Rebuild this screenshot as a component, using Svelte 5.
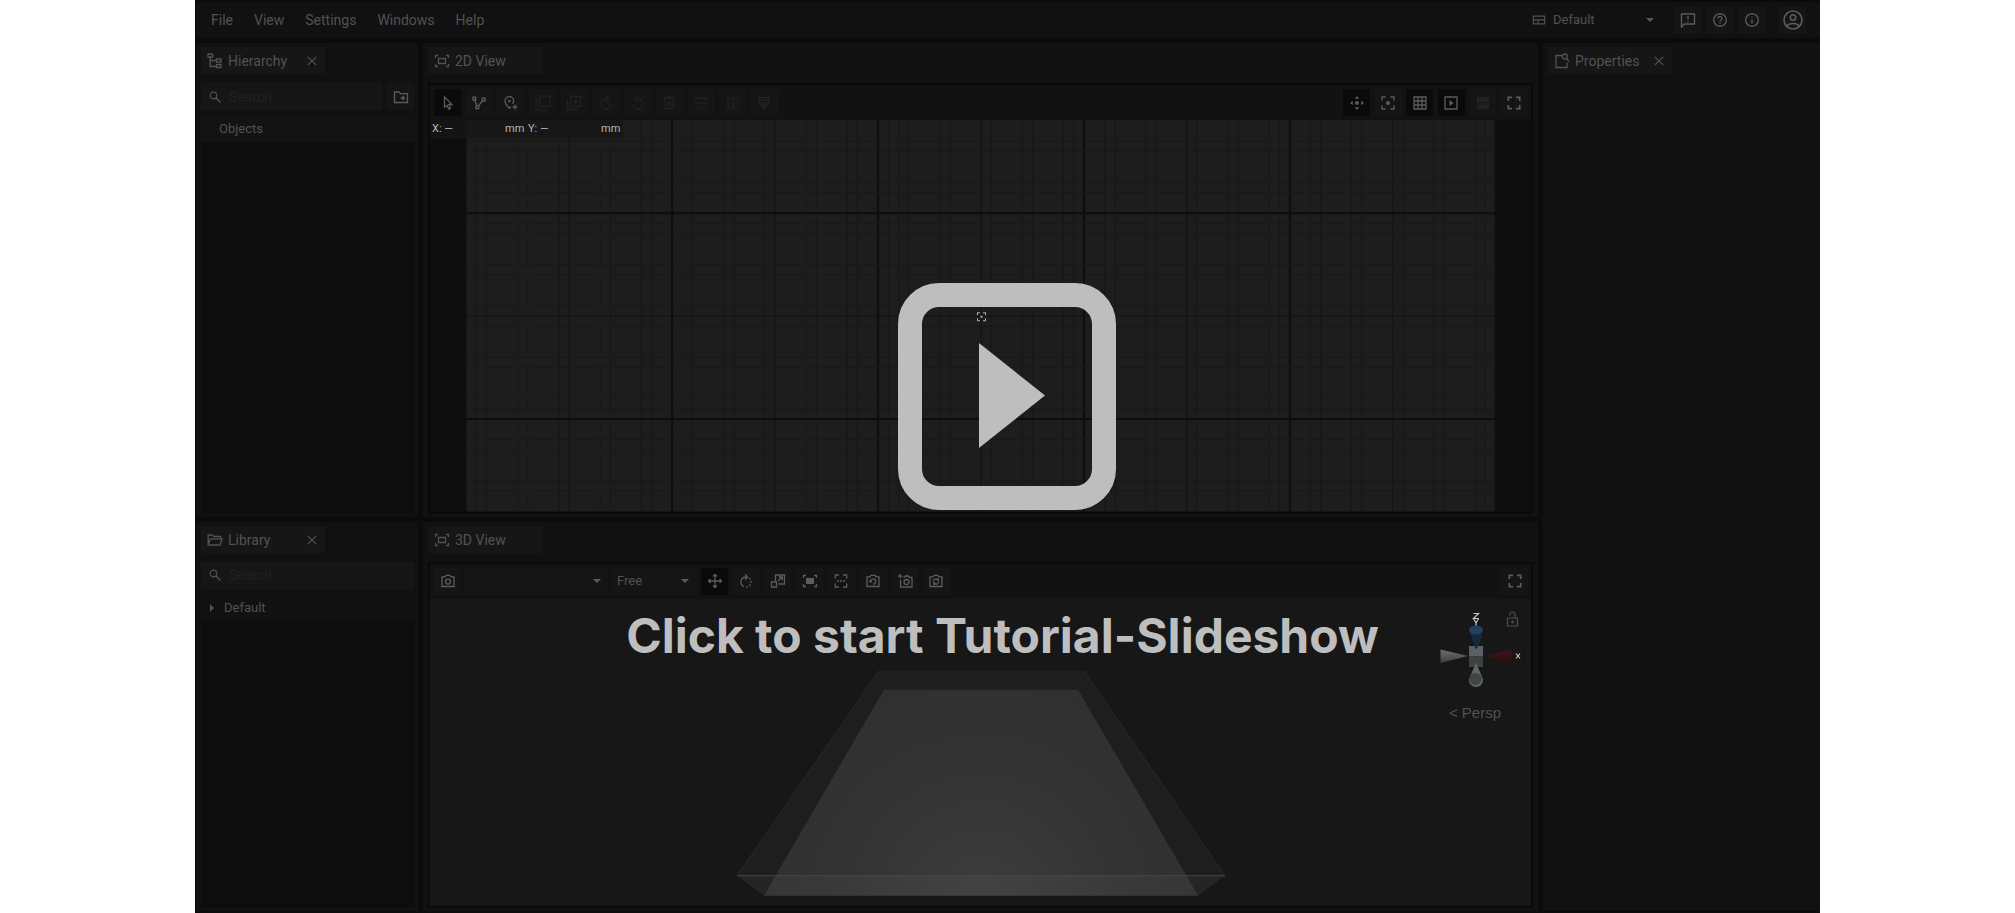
<script>
  const menus = ['File', 'View', 'Settings', 'Windows', 'Help'];

  const tools2d = [
    { icon: 'cursor', label: 'Select', active: true },
    { icon: 'path', label: 'Path' },
    { icon: 'pin', label: 'Add marker' },
    { icon: 'copy', label: 'Copy', off: true },
    { icon: 'duplicate', label: 'Duplicate', off: true },
    { icon: 'redo', label: 'Rotate right', off: true },
    { icon: 'undo', label: 'Rotate left', off: true },
    { icon: 'trash', label: 'Delete', off: true },
    { icon: 'flipv', label: 'Flip vertically', off: true },
    { icon: 'fliph', label: 'Flip horizontally', off: true },
    { icon: 'paint', label: 'Paint', off: true }
  ];
  const view2d = [
    { icon: 'pan', label: 'Pan', active: true },
    { icon: 'focus', label: 'Focus' },
    { icon: 'grid', label: 'Grid', active: true },
    { icon: 'play', label: 'Play', active: true },
    { icon: 'pdf', label: 'PDF', off: true },
    { icon: 'full', label: 'Full screen' }
  ];
  const tools3d = [
    { icon: 'move', label: 'Move', active: true },
    { icon: 'rotate', label: 'Rotate' },
    { icon: 'scale', label: 'Scale' },
    { icon: 'fitfill', label: 'Fit selection' },
    { icon: 'fitall', label: 'Fit all' },
    { icon: 'camreset', label: 'Reset camera' },
    { icon: 'camadd', label: 'Add camera' },
    { icon: 'camsync', label: 'Sync camera' }
  ];

  const step = 10.28;
  const shown = (k, split) => (k < split ? [1, 2] : [2, 3]).includes(((k % 4) + 4) % 4);
  const columns = Array.from({ length: 101 }, (_, k) => k)
    .filter((k) => k % 10 === 0 || shown(k, 42))
    .map((k) => ({ at: 37 + k * step, level: k === 0 || k % 10 ? 0 : k % 20 ? 1 : 2 }));
  const rows = Array.from({ length: 38 }, (_, i) => i - 9)
    .filter((k) => k % 10 === 0 || shown(k, 11))
    .map((k) => ({ at: 93 + k * step, level: k % 10 ? 0 : k % 20 ? 1 : 2 }));
</script>

{#snippet icon(name, size = 16)}
  <svg class="icon" width={size} height={size} viewBox="0 0 16 16" aria-hidden="true">
    {#if name === 'cursor'}
      <path d="M4.500 1.800v10.400l2.500-2 1.700 3.900 1.800-.8-1.700-3.800h3.200z" />
    {:else if name === 'path'}
      <path d="M2 2.200h2.800V5H2zM11.200 3.200H14V6h-2.800zM5 10.800h2.800v2.800H5zM3.800 5l2 5.800M11.400 6 7.500 10.800" />
    {:else if name === 'pin'}
      <path d="M6.300 13.300C3.500 10.300 2 8.300 2 6a4.300 4.300 0 0 1 8.600 0c0 1-.3 1.900-.9 2.800M6.300 13.300l1.500-1.700M12 9.500v5M9.500 12h5" /><circle cx="6.300" cy="6" r="1.300" class="fill" />
    {:else if name === 'copy'}
      <path d="M4.500 1H15v10.500H4.500zM1 4.500V15h10.500" />
    {:else if name === 'duplicate'}
      <path d="M4.500 1.500h10v10h-10zM1.500 4.500v10h10M9.500 4v5M7 6.500h5" />
    {:else if name === 'redo'}
      <path d="M8.500 4H7.500a5 5 0 1 0 5.300 5M8 1l3 3-3 3" />
    {:else if name === 'undo'}
      <path d="M7.500 4h1a5 5 0 1 1-5.300 5M8 1 5 4l3 3" />
    {:else if name === 'trash'}
      <path d="M2.500 3h11M4 3v10.500h8V3M6 2h4M7 6v5M9 6v5" />
    {:else if name === 'flipv'}
      <path d="M3 6V3h10v3M1 8h14" /><path d="M3 10v3h10v-3" stroke-dasharray="2 1.5" />
    {:else if name === 'fliph'}
      <path d="M6 3H3v10h3M8 1v14" /><path d="M10 3h3v10h-3" stroke-dasharray="2 1.5" />
    {:else if name === 'paint'}
      <path d="M3 2.500h10V8H3zM3 5.200h10M4 8v2h8V8" /><path d="M6.300 10h3.400v2.500a1.700 1.700 0 0 1-3.400 0z" class="fill" />
    {:else if name === 'pan'}
      <g class="fill"><path d="m8 1 2.300 2.800H5.700zM8 15l-2.300-2.800h4.600zM1 8l2.800-2.300v4.600zM15 8l-2.800-2.300v4.600z" /><circle cx="8" cy="8" r="2" /></g>
    {:else if name === 'focus'}
      <path d="M2 5.500V2h3.500M10.500 2H14v3.500M14 10.500V14h-3.500M5.500 14H2v-3.500" /><circle cx="8" cy="8" r="2" class="fill" />
    {:else if name === 'grid'}
      <path d="M2 2h12v12H2zM2 6h12M2 10h12M6 2v12M10 2v12" />
    {:else if name === 'play'}
      <path d="M2 2h12v12H2z" /><path d="M6.500 5v6l4-3z" class="fill" />
    {:else if name === 'pdf'}
      <rect x="2" y="2" width="12" height="12" rx="1" class="fill" /><path d="M4 10V6.500h1.200v2H4M7 6.500h1v3H7zM10.200 10V6.500H12M10.200 8.300h1.500" class="cut" />
    {:else if name === 'full'}
      <path d="M2.300 6V2.300H6M10 2.300h3.700V6M13.700 10v3.700H10M6 13.700H2.300V10" class="bold" />
    {:else if name === 'move'}
      <path d="M8 1.500v13M1.500 8h13M6 3.500l2-2 2 2M6 12.500l2 2 2-2M3.500 6l-2 2 2 2M12.500 6l2 2-2 2" />
    {:else if name === 'rotate'}
      <path d="M8.500 4H8a5 5 0 0 0-2 9.600M7.200 1.500 9.500 4 7.200 6.500" /><path d="M11 5a5 5 0 0 1-3 9" stroke-dasharray="2 1.4" />
    {:else if name === 'scale'}
      <path d="M5.500 8V2h9v9h-6M1.500 9h5v5h-5zM8 8l4-4M8.800 4h3.500v3.500" />
    {:else if name === 'fitfill'}
      <path d="M1.500 5V2.500H4M12 2.500h2.500V5M14.500 11v2.500H12M4 13.500H1.500V11" /><rect x="4" y="5" width="8" height="6" class="fill" />
    {:else if name === 'fitall'}
      <path d="M2.300 5.500V2H6M10 2h3.700v3.500M13.700 10.500V14H10M6 14H2.300v-3.500" /><path d="M4 8h8" stroke-dasharray="2 1" />
    {:else if name === 'camera' || name === 'camreset' || name === 'camsync'}
      <path d="M2 3.800h3l1-1.500h4l1 1.500h3v9.700H2z" />
      {#if name === 'camera'}<circle cx="8" cy="8.600" r="2.500" />
      {:else if name === 'camreset'}<path d="M5.500 8.500a2.600 2.600 0 1 1 2.600 2.600M4.300 7.700l1.200 1.500 1.500-1.200" />
      {:else}<path d="M5.400 8.800a2.600 2.600 0 0 1 4.500-2M10.600 8.400a2.600 2.600 0 0 1-4.500 2M10.300 5.200v2H8.500M5.700 12v-2h1.800" />{/if}
    {:else if name === 'camadd'}
      <path d="M6.500 4h1l1-1h3l1 1.500H15V14H3.500V7M3.200 1v4.500M1 3.200h4.500" /><circle cx="9.500" cy="9" r="2.500" />
    {:else if name === 'tree'}
      <path d="M1 1h4.500v3H1zM3.200 4v9.500H9M3.200 7.500H9M9.500 6H14v3H9.500zM9.500 11.500H14v3H9.500z" />
    {:else if name === 'view'}
      <path d="M1.500 5V2.500H4M12 2.500h2.500V5M14.500 11v2.500H12M4 13.500H1.500V11M4.500 5.500h7v5h-7z" />
    {:else if name === 'folder'}
      <path d="M1.200 13V3h4.300L7 4.500h6.500v2M1.200 13 3.500 6.800h11.700L13 13z" />
    {:else if name === 'newfolder'}
      <path d="M1.500 3H6l1.500 1.700h7v8.800h-13zM7.500 9h4M9.500 7l2 2-2 2" />
    {:else if name === 'search'}
      <circle cx="6.300" cy="6.300" r="3.800" /><path d="m9.200 9.200 5 5" class="bold" />
    {:else if name === 'close'}
      <path d="m3.200 3.200 9.600 9.600M12.800 3.200l-9.600 9.600" />
    {:else if name === 'layout'}
      <path d="M1.500 3.500h13v9h-13zM1.500 7.800h13M7 7.800v4.700" />
    {:else if name === 'feedback'}
      <path d="M1.500 15V2h13v10H4.300z" /><path d="M8 4v3.500M8 9v1.300" />
    {:else if name === 'help'}
      <circle cx="8" cy="8" r="6.300" /><path d="M6 6.500a2 2 0 1 1 3 1.700c-.7.400-1 .7-1 1.500M8 11v1.300" />
    {:else if name === 'info'}
      <circle cx="8" cy="8" r="6.300" /><path d="M8 7.200v4.300M8 4.500v1.300" />
    {:else if name === 'user'}
      <circle cx="8" cy="8" r="7.200" /><circle cx="8" cy="6" r="2.200" /><path d="M3.200 13c1.600-3 8-3 9.600 0" />
    {:else if name === 'props'}
      <path d="M8 2.500H2v12h11V9.500" /><circle cx="10.800" cy="3.500" r="2.500" /><path d="m12.500 5.500 2.500 3" />
    {/if}
  </svg>
{/snippet}

{#snippet toolbar(items)}
  {#each items as t}
    <button class="tool" class:active={t.active} disabled={t.off} aria-label={t.label}>{@render icon(t.icon)}</button>
  {/each}
{/snippet}

{#snippet tab(name, label, closable)}
  <div class="tab" class:closable>
    {@render icon(name)}<span>{label}</span>
    {#if closable}<button class="close" aria-label="Close {label}">{@render icon('close', 14)}</button>{/if}
  </div>
{/snippet}

<div class="page">
  <div class="stage">
    <header>
      <nav>{#each menus as m}<button>{m}</button>{/each}</nav>
      <div class="account">
        <label class="layout">{@render icon('layout', 14)}
          <select aria-label="Layout"><option>Default</option></select>
        </label>
        <button class="tool" aria-label="Feedback">{@render icon('feedback')}</button>
        <button class="tool" aria-label="Help">{@render icon('help')}</button>
        <button class="tool" aria-label="Information">{@render icon('info')}</button>
        <button class="tool user" aria-label="Account">{@render icon('user', 20)}</button>
      </div>
    </header>

    <main>
      <section class="panel">
        {@render tab('tree', 'Hierarchy', true)}
        <div class="find">
          <label>{@render icon('search', 14)}<input type="text" placeholder="Search" aria-label="Search objects" /></label>
          <button class="tool" aria-label="New folder">{@render icon('newfolder')}</button>
        </div>
        <div class="row head">Objects</div>
        <div class="list"></div>
      </section>

      <section class="panel view">
        {@render tab('view', '2D View', false)}
        <div class="frame">
          <div class="bar">
            <div class="group wide">{@render toolbar(tools2d)}</div>
            <div class="group side">{@render toolbar(view2d)}</div>
          </div>
          <div class="canvas plan">
            <svg viewBox="0 0 1101 391" preserveAspectRatio="xMidYMid slice" aria-hidden="true">
              <rect x="37" y="0" width="1028" height="391" fill="#1d1d1d" />
              {#each columns as c}<line class="g{c.level}" x1={c.at} x2={c.at} y1="0" y2="391" />{/each}
              {#each rows as r}<line class="g{r.level}" x1="37" x2="1065" y1={r.at} y2={r.at} />{/each}
              <g fill="none" stroke="#aaa"><path d="M547.500 195v-2.500h2.500M553 192.500h2.500v2.500M555.500 198v2.500h-2.500M550 200.500h-2.500v-2.500" /><rect x="551" y="196" width="1" height="1" /></g>
            </svg>
            <div class="coords"><span>X: —</span><span>mm</span><span>Y: —</span><span>mm</span></div>
          </div>
        </div>
      </section>

      <section class="panel props">
        {@render tab('props', 'Properties', true)}
      </section>

      <section class="panel">
        {@render tab('folder', 'Library', true)}
        <div class="find">
          <label>{@render icon('search', 14)}<input type="text" placeholder="Search" aria-label="Search library" /></label>
        </div>
        <div class="row entry"><i></i>Default</div>
        <div class="list"></div>
      </section>

      <section class="panel view">
        {@render tab('view', '3D View', false)}
        <div class="frame">
          <div class="bar">
            <div class="cams">
              <button class="tool" aria-label="Camera">{@render icon('camera')}</button>
              <select class="cam" aria-label="Saved camera"><option></option></select>
              <select class="mode" aria-label="Camera mode"><option>Free</option></select>
              <div class="group mid">{@render toolbar(tools3d)}</div>
            </div>
            <button class="tool" aria-label="Full screen">{@render icon('full')}</button>
          </div>
          <div class="canvas">
            <svg viewBox="0 0 1101 308" preserveAspectRatio="xMidYMid slice" aria-hidden="true">
              <defs>
                <radialGradient id="floor" gradientUnits="userSpaceOnUse" cx="551" cy="305" r="290">
                  <stop offset="0" stop-color="#3d3d3d" /><stop offset=".5" stop-color="#333" /><stop offset="1" stop-color="#2e2e2e" />
                </radialGradient>
              </defs>
              <path d="M449 72h205l141 205-27 20H334l-27-20z" fill="#1e1e1e" />
              <path d="M454 91h194l120 206H334z" fill="url(#floor)" />
              <path d="M307 277h488l-27 20H334z" fill="#fff" fill-opacity=".03" />
              <path d="M449 72 307 277M654 72l141 205" stroke="#292929" fill="none" />
              <path d="M307 277h488" stroke="#484848" />
              <path d="m449 72 5 19M654 72l-6 19" stroke="#242424" />
            </svg>
            <svg class="gizmo" viewBox="0 0 90 120" width="90" height="120" aria-hidden="true">
              <defs>
                <linearGradient id="cone" x2="0" y2="1"><stop stop-color="#6b6f74" /><stop offset="1" stop-color="#3c3f42" /></linearGradient>
                <linearGradient id="red" x2="0" y2="1"><stop stop-color="#431518" /><stop offset="1" stop-color="#2c0c0e" /></linearGradient>
              </defs>
              <path d="M4.500 42.500 32 49 4.500 56z" fill="url(#cone)" />
              <path d="M75.500 42.500 48 49l27.500 7z" fill="url(#red)" />
              <rect x="33" y="39" width="14" height="10.500" fill="#5b6066" /><rect x="33" y="49.500" width="14" height="10.500" fill="#3d4142" />
              <path d="M33.500 25 40 43l6.500-18z" fill="#152940" /><path d="M45.500 28 41 41" stroke="#173a1d" />
              <ellipse cx="40" cy="23" rx="7" ry="4.500" fill="#21405f" />
              <path d="M40 55.500 33.500 71a7 6.500 0 1 0 13 0z" fill="#606468" /><circle cx="39.500" cy="72" r="6" fill="#404444" />
              <g stroke="#c4c4c4" stroke-width="1.2" fill="none"><path d="M37.500 6.500h5l-5 5h5.500M37.500 11.500 40 16l2.500-4.500M40 15.500v3" /><path d="m80 46.500 4 5M84 46.500l-4 5" /></g>
              <g stroke="#4f4f4f" stroke-width="1.2" fill="none"><path d="M71.500 11h10v8h-10zM74 8.500V7.500a2.500 2.500 0 0 1 5 0V11" /><circle cx="76.500" cy="15" r=".8" /></g>
            </svg>
            <button class="persp">&lt; Persp</button>
          </div>
        </div>
      </section>
    </main>

    <button class="start">
      <svg width="218" height="228" viewBox="0 0 218 228" aria-hidden="true">
        <rect x="12" y="12" width="194" height="203" rx="29" fill="none" stroke="#bebebe" stroke-width="24" />
        <path d="M81 60v105l66-52.500z" fill="#bebebe" />
      </svg>
      <span>Click to start Tutorial-Slideshow</span>
    </button>
  </div>
</div>

<style>
  :global(body) { margin: 0; background: #fff; }
  .page { padding: 0 195px; }
  .stage {
    position: relative; box-sizing: border-box; height: 100vh; padding: 2px 0 2px 1px;
    display: flex; flex-direction: column; gap: 5px; overflow: hidden;
    background: #0b0b0b; color: #525252; font: 14px/20px Roboto, sans-serif;
  }
  button, select, input { font: inherit; color: inherit; border: 0; padding: 0; margin: 0; background: none; border-radius: 0; }
  .icon { display: block; flex: none; fill: none; stroke: currentColor; stroke-width: 1.3; }
  .icon .fill { fill: currentColor; stroke: none; }
  .icon .bold { stroke-width: 1.7; }
  .icon .cut { stroke: #151515; stroke-width: 1; }
  header { height: 36px; flex: none; display: flex; justify-content: space-between; background: #111; }
  nav { display: flex; gap: 21px; padding-left: 15px; }
  .account { display: flex; align-items: center; gap: 5px; padding-right: 14px; }
  .layout { display: flex; align-items: center; gap: 7px; margin-right: 11px; }
  .layout select { width: 105px; }
  .account .user { margin-left: 9px; }
  select {
    appearance: none; height: 27px; font-size: 13px;
    background: url("data:image/svg+xml,%3Csvg xmlns='http://www.w3.org/2000/svg' width='8' height='4'%3E%3Cpath d='M0 0h8L4 4z' fill='%235a5a5a'/%3E%3C/svg%3E") no-repeat right 4px center;
  }
  .tool { width: 27px; height: 27px; flex: none; display: grid; place-items: center; background: #151515; color: #5c5c5c; }
  .tool.active { background: #0a0a0a; }
  .tool:disabled { color: #222; }
  main { flex: 1; min-height: 0; display: grid; grid-template: 473fr 389fr / 222px 1fr 277px; gap: 5px; }
  .panel { background: #111; padding: 4px 4px 3px 5px; display: flex; flex-direction: column; min-width: 0; min-height: 0; }
  .view { padding-right: 5px; }
  .props { grid-row: span 2; }
  .tab {
    align-self: flex-start; box-sizing: border-box; height: 27px; width: 115px; margin-bottom: 9px; padding: 1px 6px 0;
    display: flex; align-items: center; gap: 5px; background: #161616; flex: none;
  }
  .tab.closable { width: 124px; }
  .tab span { white-space: nowrap; }
  .close { margin-left: auto; }
  .find { display: flex; gap: 5px; margin-bottom: 6px; flex: none; }
  .find label { flex: 1; min-width: 0; height: 27px; padding-left: 7px; display: flex; align-items: center; gap: 7px; background: #161616; }
  .find input { flex: 1; min-width: 0; outline: 0; }
  .find input::placeholder { color: #212121; opacity: 1; }
  .row { height: 26px; flex: none; display: flex; align-items: center; font-size: 13px; }
  .head { padding-left: 18px; background: #131313; }
  .entry { gap: 10px; padding-left: 9px; }
  .entry i { border: 4px solid transparent; border-left-color: currentColor; border-right-width: 0; }
  .list { flex: 1; background: #0d0d0d; }
  .frame { flex: 1; min-height: 0; display: flex; flex-direction: column; border: 2px solid #0a0a0a; }
  .bar { height: 35px; flex: none; box-sizing: border-box; padding: 0 3px 0 4px; display: flex; justify-content: space-between; align-items: center; background: #121212; }
  .group { display: flex; justify-content: space-between; }
  .wide { width: 344px; }
  .side { width: 185px; }
  .mid { width: 249px; }
  .cams { display: flex; gap: 4px; }
  .cams select { background-color: #151515; }
  .cams .cam { width: 143px; background-position: right 7px center; }
  .cams .mode { width: 85px; padding-left: 5px; background-position: right 8px center; }
  .canvas { position: relative; flex: 1; min-height: 0; background: #171717; overflow: hidden; }
  .canvas > svg:first-child { display: block; width: 100%; height: 100%; }
  .plan { background: #0d0d0d; }
  .g0 { stroke: #181818; }
  .g1 { stroke: #131313; }
  .g2 { stroke: #0d0d0d; stroke-width: 2; }
  .coords {
    position: absolute; left: 0; top: 0; height: 18px; padding-left: 2px; box-sizing: border-box;
    display: grid; grid-template-columns: 73px 23px 73px 22px; align-items: center; font-size: 11px; line-height: 16px; color: #b4b4b4;
    background: #161616cc;
  }
  .gizmo { position: absolute; right: 5px; top: 8px; }
  .persp { position: absolute; right: 30px; top: 104px; font-size: 15px; font-family: "Liberation Sans", sans-serif; }
  .start {
    position: absolute; inset: 0; width: 100%; cursor: pointer;
    display: flex; flex-direction: column; align-items: center; justify-content: center; gap: 96px; padding: 34px 2px 0 0;
  }
  .start span { font: 700 48px/58px Inter, sans-serif; color: #bebebe; white-space: nowrap; padding-right: 8px; }
</style>
